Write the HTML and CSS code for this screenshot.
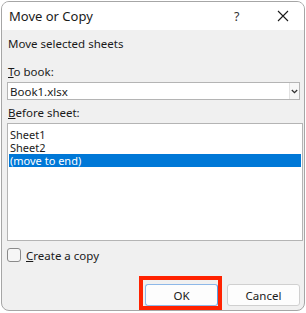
FILE: index.html
```html
<!DOCTYPE html>
<html>
<head>
<meta charset="utf-8">
<link rel="stylesheet" href="styles.css">
</head>
<body>
<div class="window">
  <div class="titlebar">
    <span class="title">Move or Copy</span>
    <span class="help">?</span>
    <span class="close">
      <svg width="12" height="12" viewBox="0 0 12 12"><path d="M1 1 L11 11 M11 1 L1 11" stroke="#1a1a1a" stroke-width="1.1" fill="none"/></svg>
    </span>
  </div>
  <div class="content">
    <div class="line intro">Move selected sheets</div>
    <div class="line label-book"><u>T</u>o book:</div>
    <div class="select">
      <span class="select-text">Book1.xlsx</span>
      <span class="select-arrow">
        <svg width="7" height="5" viewBox="0 0 7 5"><path d="M0.8 1 L3.5 3.7 L6.2 1" stroke="#333" stroke-width="1.3" fill="none"/></svg>
      </span>
    </div>
    <div class="line label-sheet"><u>B</u>efore sheet:</div>
    <div class="listbox">
      <div class="item">Sheet1</div>
      <div class="item">Sheet2</div>
      <div class="item selected">(move to end)</div>
    </div>
    <div class="check-row">
      <span class="checkbox"></span>
      <span class="check-label"><u>C</u>reate a copy</span>
    </div>
    <div class="buttons">
      <div class="ok-wrap">
        <div class="btn ok">OK</div>
        <div class="highlight"></div>
      </div>
      <div class="btn">Cancel</div>
    </div>
  </div>
</div>
</body>
</html>
```

FILE: styles.css
```css
html, body {
  margin: 0;
  padding: 0;
  background: #ffffff;
}
body {
  padding: 1px 0 0 1px;
  font-family: "Noto Sans", "Liberation Sans", sans-serif;
  font-size: 11.5px;
  color: #1a1a1a;
}
.window {
  width: 302px;
  height: 308px;
  border: 1px solid #a6a6a6;
  border-radius: 8px;
  overflow: hidden;
  background: #f0f0f0;
  display: flex;
  flex-direction: column;
}
.titlebar {
  height: 28px;
  background: #ffffff;
  display: flex;
  align-items: center;
  flex-shrink: 0;
}
.title {
  font-size: 13px;
  padding-left: 7px;
  flex: 1;
  color: #1a1a1a;
}
.help {
  font-size: 12.5px;
  width: 10px;
  margin-right: 33px;
  color: #333;
}
.close {
  width: 12px;
  height: 12px;
  margin-right: 15px;
  display: flex;
}
.content {
  padding: 6px 4px 0 5px;
  display: flex;
  flex-direction: column;
}
.line {
  height: 16px;
  line-height: 16px;
  padding-left: 1px;
}
.label-book {
  margin-top: 12px;
}
.select {
  margin-top: 2px;
  height: 16px;
  border: 1px solid #b4b4b4;
  background: #ffffff;
  display: flex;
  align-items: center;
}
.select-text {
  flex: 1;
  padding-left: 2px;
}
.select-arrow {
  width: 9px;
  height: 16px;
  border-left: 1px solid #e2e2e2;
  background: #f7f7f7;
  display: flex;
  align-items: center;
  justify-content: center;
}
.label-sheet {
  margin-top: 5px;
}
.listbox {
  margin-top: 2px;
  width: 292px;
  height: 112px;
  border: 1px solid #b4b4b4;
  background: #ffffff;
  padding: 4px 1px 0 1px;
}
.item {
  height: 13px;
  line-height: 13px;
  font-size: 11px;
  padding-left: 1px;
  overflow: hidden;
}
.item.selected {
  background: #0078d7;
  color: #ffffff;
}
.check-row {
  margin-top: 6px;
  height: 16px;
  display: flex;
  align-items: center;
  gap: 5px;
}
.checkbox {
  width: 12px;
  height: 12px;
  border: 1px solid #8a8a8a;
  border-radius: 3px;
  background: #f6f6f6;
}
.buttons {
  margin-top: 21px;
  display: flex;
  justify-content: flex-end;
  gap: 9px;
}
.btn {
  width: 71px;
  height: 20px;
  border: 1px solid #d0d0d0;
  border-radius: 3px;
  background: #fdfdfd;
  display: flex;
  align-items: center;
  justify-content: center;
  font-size: 11.5px;
}
.ok-wrap {
  position: relative;
}
.btn.ok {
  border-color: #8db8e8;
  border-right-color: #5a9ee0;
}
.highlight {
  position: absolute;
  left: -6px;
  top: -8px;
  width: 75px;
  height: 26px;
  border: 4px solid #ff2200;
}
```
